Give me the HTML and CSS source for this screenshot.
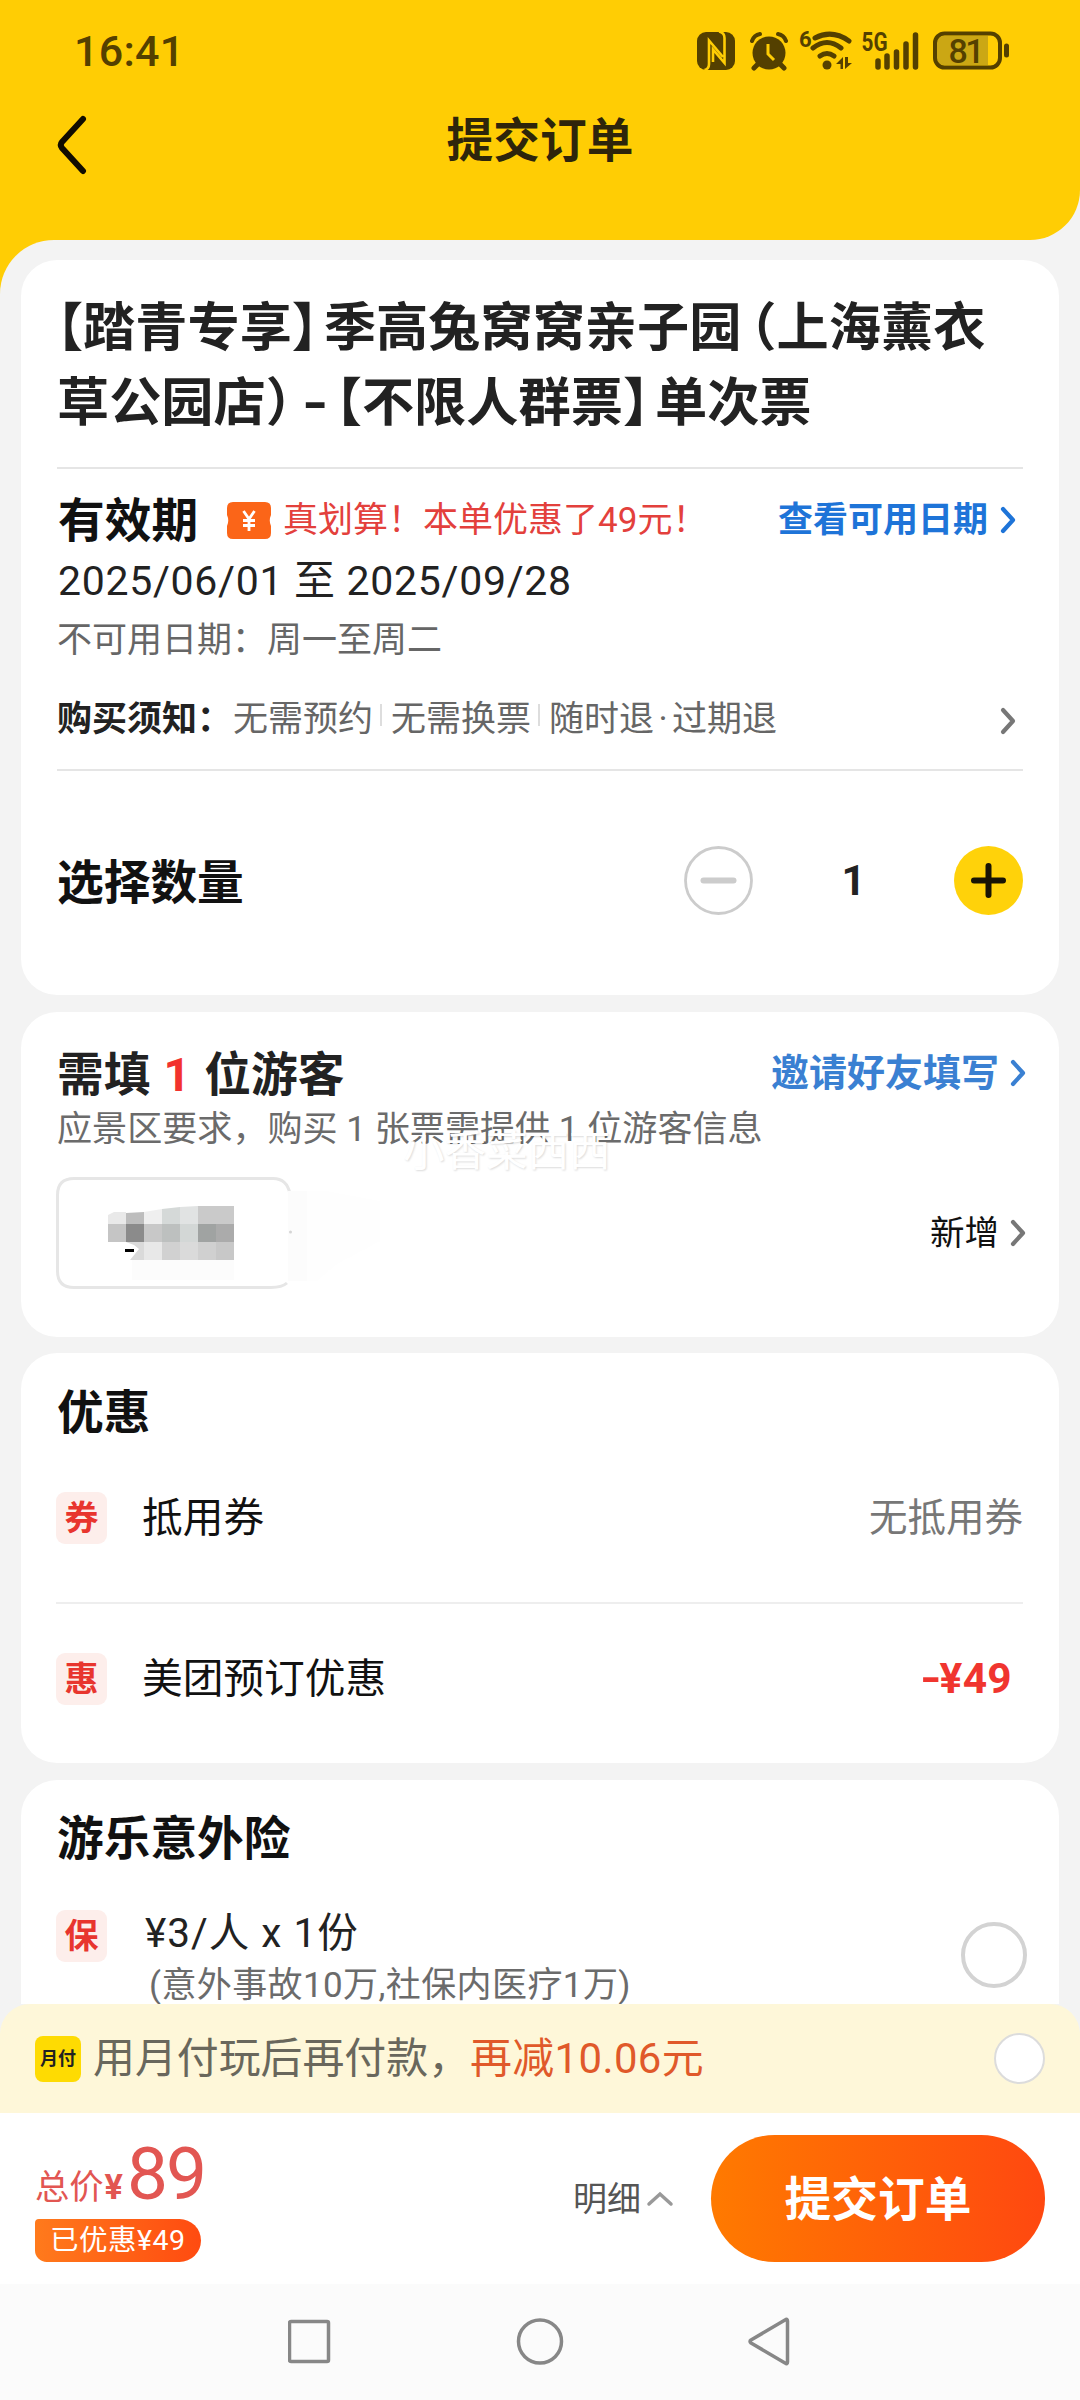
FILE: index.html
```html
<!DOCTYPE html>
<html lang="zh-CN">
<head>
<meta charset="utf-8">
<title>提交订单</title>
<link rel="stylesheet" href="styles.css">
</head>
<body>
<div class="screen">
  <header class="header">
    <div class="status">
      <span class="clock">16:41</span>
      <svg class="status-icons" width="320" height="48" viewBox="695 27 320 48" fill="none" stroke="#544000">
        <rect x="697" y="32" width="38" height="38" rx="9" fill="#544000" stroke="none"/>
        <path d="M704.500 70q4.500-1 4.500-6V40.500L723 57M719 31.500q5.500 1 5.500 6.500V63L713 49.500V62" stroke="#ffcd04" stroke-width="2.600"/>
        <circle cx="769" cy="53" r="16.500" fill="#544000" stroke="none"/>
        <path d="M752 41q2-6 8-7M786 41q-2-6-8-7" stroke-width="4" stroke-linecap="round"/>
        <path d="M758 64l-4 4M780 64l4 4" stroke-width="5" stroke-linecap="round"/>
        <path d="M768 44v10l6 6" stroke="#ffcd04" stroke-width="3"/>
        <text class="icon-text" x="799" y="46.500" font-size="22">6</text>
        <path d="M815 38q17-9 34 3M813 48q14-11 28 0M820 56q7-5 14 0" stroke-width="5" stroke-linecap="round"/>
        <circle cx="827" cy="65" r="4.500" fill="#544000" stroke="none"/>
        <path d="M836 64l7-7v12h-2.500v-5zM845 57v12l7-6h-4v-6z" fill="#544000" stroke="none"/>
        <text class="icon-text" x="861.500" y="50.500" font-size="25" textLength="26" lengthAdjust="spacingAndGlyphs">5G</text>
        <path d="M878 61v6M887 56v11M896.500 52v15M906 44v23M915.500 35v32" stroke-width="5.500" stroke-linecap="round"/>
        <path d="M943 36h45v29h-45a6 6 0 0 1-6-6V42a6 6 0 0 1 6-6z" fill="#cba714" stroke="none"/>
        <rect x="935" y="33.500" width="65" height="34" rx="9.500" stroke-width="4"/>
        <path d="M1006.500 46v9" stroke-width="5" stroke-linecap="round"/>
        <text class="icon-text medium" x="948.500" y="62.500" font-size="34" textLength="36">81</text>
      </svg>
    </div>
    <div class="titlebar">
      <svg class="back" width="32" height="60" viewBox="0 0 32 60"><path d="M28 4L7 27q-2.500 3 0 6L28 56" fill="none" stroke="#110c00" stroke-width="6" stroke-linecap="round"/></svg>
      <h1 class="page-title">提交订单</h1>
    </div>
  </header>

  <main class="content">
    <section class="card card-ticket">
      <h2 class="product"><span class="half">【</span>踏青专享<span class="half closing">】</span>季高兔窝窝亲子园<span class="half paren">（</span>上海薰衣<br>草公园店<span class="half paren-end">）</span><span class="dash">-</span><span class="half">【</span>不限人群票<span class="half closing">】</span>单次票</h2>
      <div class="validity">
        <div class="row validity-head">
          <h3 class="heading">有效期</h3>
          <svg class="coupon" width="44" height="37" viewBox="0 0 44 37"><path d="M6 0h32q6 0 6 6v7q-2.500 5.500 0 11v7q0 6-6 6H6q-6 0-6-6v-7q2.500-5.500 0-11V6q0-6 6-6z" fill="#fb6518"/><path d="M16.500 9l5.500 8 5.500-8M22 17v12M16 18.500h12M16 23.500h12" fill="none" stroke="#fff" stroke-width="2.800"/></svg>
          <span class="deal">真划算！本单优惠了49元！</span>
          <a class="link">查看可用日期<svg class="chev" width="18" height="28" viewBox="0 0 18 28"><path d="M4 3l10 11L4 25"/></svg></a>
        </div>
        <p class="dates">2025/06/01 至 2025/09/28</p>
        <p class="note">不可用日期：周一至周二</p>
        <div class="row rules">
          <strong>购买须知：</strong><span class="rule">无需预约</span><i class="sep"></i><span class="rule">无需换票</span><i class="sep"></i><span class="rule">随时退<span class="dot">·</span>过期退</span>
          <svg class="chev end grey" width="18" height="28" viewBox="0 0 18 28"><path d="M4 3l10 11L4 25"/></svg>
        </div>
      </div>
      <div class="row quantity">
        <h3 class="heading">选择数量</h3>
        <div class="stepper">
          <svg width="69" height="69" viewBox="0 0 69 69"><circle cx="34.500" cy="34.500" r="33" fill="#fff" stroke="#ccc" stroke-width="2.800"/><path d="M19.500 34.500h30" stroke="#ccc" stroke-width="6" stroke-linecap="round"/></svg>
          <span class="count">1</span>
          <svg width="69" height="69" viewBox="0 0 69 69"><circle cx="34.500" cy="34.500" r="34.500" fill="#ffd20a"/><path d="M20 34.500h29M34.500 20v29" stroke="#181405" stroke-width="6" stroke-linecap="round"/></svg>
        </div>
      </div>
    </section>

    <section class="card card-guest">
      <div class="row guest-head">
        <h3 class="heading dark">需填<span class="num">1</span>位游客</h3>
        <a class="link invite">邀请好友填写<svg class="chev" width="18" height="28" viewBox="0 0 18 28"><path d="M4 3l10 11L4 25"/></svg></a>
      </div>
      <p class="guest-note">应景区要求，购买 1 张票需提供 1 位游客信息<span class="watermark">小香菜西西</span></p>
      <div class="row guest-row">
        <svg width="340" height="112" viewBox="0 0 340 112">
          <path d="M235 14h35l54 10v40l-45 24-19 16h-25z" fill="#fefefe"/>
          <path d="M234 17Q231 1.500 217 1.500H18Q1.500 1.500 1.500 18V94Q1.500 110.500 18 110.500H215Q226 110.500 231 106" fill="none" stroke="#e6e6e6" stroke-width="3"/>
          <rect x="232" y="14" width="19" height="90" fill="#fcfcfc"/>
          <rect x="76" y="83" width="102" height="20" fill="#fcfcfc"/>
          <circle cx="234.500" cy="55" r="1.500" fill="#d5d5d5"/>
          <path d="M52 38l6-3h12v12H52z" fill="#e9e9e9"/>
          <path d="M70 36l18-1v12H70z" fill="#bdbdbd"/>
          <path d="M88 35l18-3v15H88z" fill="#efefef"/>
          <path d="M106 32l18-2v17h-18z" fill="#d5d9d8"/>
          <path d="M124 30l18-1v18h-18z" fill="#e1e3e3"/>
          <rect x="142" y="29" width="36" height="18" fill="#cacaca"/>
          <rect x="52" y="47" width="18" height="18" fill="#c5c5c5"/><rect x="70" y="47" width="18" height="18" fill="#8b8b8b"/>
          <rect x="88" y="47" width="18" height="18" fill="#c8c8c8"/><rect x="106" y="47" width="18" height="18" fill="#bdc0bf"/>
          <rect x="124" y="47" width="18" height="18" fill="#d3d7d6"/><rect x="142" y="47" width="18" height="18" fill="#a0a3a2"/>
          <rect x="160" y="47" width="18" height="18" fill="#ababab"/>
          <path d="M74 83l9-11-5-4-8-3h18v18z" fill="#dadada"/>
          <rect x="88" y="65" width="18" height="18" fill="#e8e8e8"/><rect x="106" y="65" width="18" height="18" fill="#d1d1d1"/>
          <rect x="124" y="65" width="18" height="18" fill="#dadada"/><rect x="142" y="65" width="18" height="18" fill="#d0d0d0"/>
          <rect x="160" y="65" width="18" height="18" fill="#c8c8c8"/>
          <rect x="69" y="72" width="9" height="3" fill="#000"/>
        </svg>
        <a class="add">新增<svg class="chev grey" width="18" height="28" viewBox="0 0 18 28"><path d="M4 3l10 11L4 25"/></svg></a>
      </div>
    </section>

    <section class="card card-promo">
      <h3 class="heading">优惠</h3>
      <div class="row promo">
        <span class="badge">券</span><span class="label">抵用券</span><span class="value">无抵用券</span>
      </div>
      <div class="row promo second">
        <span class="badge">惠</span><span class="label">美团预订优惠</span><span class="value minus"><span class="minus-sign">-</span>¥49</span>
      </div>
    </section>

    <section class="card card-insure">
      <h3 class="heading">游乐意外险</h3>
      <div class="row insure">
        <span class="badge">保</span>
        <div class="insure-text">
          <p class="insure-price">¥3/人 x 1份</p>
          <p class="insure-note">(意外事故10万,社保内医疗1万)</p>
        </div>
        <span class="radio"></span>
      </div>
    </section>
  </main>

  <footer class="footer">
    <div class="row paylater">
      <span class="pay-logo">月付</span>
      <span class="pay-text">用月付玩后再付款，<em>再减10.06元</em></span>
      <span class="radio small"></span>
    </div>
    <div class="row checkout">
      <div class="total">
        <p class="sum">总价<b>¥</b><span class="amount">89</span></p>
        <span class="saved">已优惠¥49</span>
      </div>
      <a class="detail">明细<svg width="28" height="16" viewBox="0 0 28 16"><path d="M3 13L14 3l11 10" fill="none" stroke="#999" stroke-width="3.500" stroke-linecap="round"/></svg></a>
      <button class="submit">提交订单</button>
    </div>
    <nav class="sysnav">
      <svg width="504" height="50" viewBox="288 2316 504 50" fill="none" stroke="#878787" stroke-width="3.500" stroke-linejoin="round">
        <rect x="289.500" y="2321.500" width="39" height="40" rx="1.500"/>
        <circle cx="540" cy="2341.500" r="21.500"/>
        <path d="M787.500 2321v41q0 3-2.500 1L751 2343q-2-1.500 0-3l34-20q2.500-2 2.500 1z"/>
      </svg>
    </nav>
  </footer>
</div>
</body>
</html>
```
FILE: styles.css
```css
* { box-sizing: border-box; margin: 0; padding: 0; }
body {
  width: 1080px;
  height: 2400px;
  overflow: hidden;
  background: #f3f3f3;
  color: #111;
  font-family: Roboto, "Noto Sans CJK SC", sans-serif;
}
h1, h2, h3 { font-weight: 700; }
p { white-space: nowrap; }
svg { display: block; flex: none; }
.screen { display: flex; flex-direction: column; height: 2400px; background: linear-gradient(90deg, #ffcd04 50%, #f3f3f3 50%); }
.row { display: flex; align-items: center; white-space: nowrap; line-height: 1; }

.header { flex: none; height: 240px; padding-top: 27px; background: #ffcd04; border-bottom-right-radius: 50px; }
.status { display: flex; align-items: center; justify-content: space-between; height: 48px; padding: 0 65px 0 74px; color: #544000; }
.clock { font-size: 43px; font-weight: 500; letter-spacing: 0.3px; }
.icon-text { font-family: Roboto, sans-serif; font-weight: 700; fill: #544000; stroke: none; }
.icon-text.medium { font-weight: 500; }
.titlebar { display: grid; grid-template-columns: 86px 1fr 86px; align-items: center; height: 60px; margin-top: 40px; }
.back { margin-left: 55px; }
.page-title { text-align: center; font-size: 46.7px; line-height: 60px; margin-top: -8px; color: #2e250b; }

.content { flex: 1; min-height: 0; display: flex; flex-direction: column; padding: 20px 21px 0; background: #f3f3f3; border-top-left-radius: 54px; overflow: hidden; }
.card { flex: none; background: #fff; border-radius: 36px; padding: 0 36px; margin-bottom: 17px; }
.heading { height: 60px; font-size: 46.7px; line-height: 63px; }
.dark { color: #222; }
.chev { fill: none; stroke: currentColor; stroke-width: 4.2; stroke-linecap: round; stroke-linejoin: round; }
.grey { color: #777; }
.end { margin: 3px 6px 0 auto; }

.card-ticket { height: 735px; padding-top: 31px; }
.product { height: 178px; border-bottom: 2px solid #e5e5e5; font-size: 52.2px; line-height: 75px; color: #222; white-space: nowrap; }
.half { font-family: "Noto Sans CJK SC", sans-serif; font-feature-settings: "halt"; line-height: 1; }
.closing { margin-right: 6px; }
.paren { margin-left: 9px; }
.paren-end { margin-right: 12px; }
.dash { display: inline-block; width: 32px; transform: scaleX(1.3); transform-origin: 0 50%; margin-left: -2px; margin-right: 2px; }
.validity { height: 302px; border-bottom: 2px solid #e5e5e5; padding-top: 21px; }
.validity-head { height: 60px; padding-left: 1px; }
.coupon { margin-left: 29px; }
.deal { margin-left: 12px; font-size: 35px; line-height: 60px; padding-top: 2px; color: #e3403c; }
.link { display: flex; align-items: center; margin-left: auto; margin-right: 6px; gap: 11px; font-size: 35px; font-weight: 700; color: #1e74d8; }
.dates { padding-left: 1px; font-size: 41px; line-height: 62px; letter-spacing: 0.7px; color: #222; }
.note { padding-left: 0; font-size: 35px; line-height: 58px; color: #666; }
.rules { height: 60px; margin-top: 19px; font-size: 35px; color: #666; }
.rules strong { color: #222; }
.rules .rule { margin-left: 1px; }
.sep { width: 2px; height: 22px; margin: -8px 8px 0 7px; background: #ddd; }
.dot { display: inline-block; width: 18px; text-align: center; }
.quantity { height: 222px; justify-content: space-between; }
.stepper { display: flex; align-items: center; margin-top: -3px; }
.count { width: 201px; text-align: center; font-size: 42px; font-weight: 700; color: #222; }

.card-guest { height: 325px; margin-bottom: 16px; padding-top: 31px; }
.guest-head { height: 60px; justify-content: space-between; }
.num { margin: 0 14px 0 13px; color: #f2322e; font-size: 47px; }
.invite { margin-right: -4px; font-size: 38px; color: #3a80d2; gap: 10px; }
.guest-note { position: relative; height: 50px; font-size: 35.1px; line-height: 53px; color: #6b6b6b; }
.watermark { position: absolute; left: 346px; top: 24px; font-size: 41.5px; line-height: 50px; color: #fff; text-shadow: 1px 1px 2px rgba(0,0,0,.14); }
.guest-row { margin-top: 24px; margin-left: -1px; justify-content: space-between; }
.add { display: flex; align-items: center; gap: 10px; margin-right: -4px; font-size: 34.5px; color: #111; }

.card-promo { height: 410px; padding-top: 29px; }
.promo { height: 104px; margin: 24px 0 32px -1px; }
.card-promo .second { border-top: 2px solid #eee; height: 152px; margin-top: 0; margin-bottom: 0; }
.badge { flex: none; width: 51px; height: 52px; border-radius: 9px; background: #fdeeeb; color: #e8352e; font-size: 34px; line-height: 52px; font-weight: 700; text-align: center; }
.label { margin-left: 35px; font-size: 40.7px; }
.value { margin-left: auto; font-size: 38.5px; color: #777; }
.minus { display: flex; margin-right: 11px; font-size: 42.5px; font-weight: 700; letter-spacing: 0.3px; color: #f0352f; }
.minus-sign { display: inline-block; width: 20px; transform: scaleX(1.3); transform-origin: 0 50%; }

.card-insure { height: 300px; padding-top: 28px; }
.insure { align-items: flex-start; margin: 42px -4px 0 -1px; }
.insure-text { margin-left: 38px; }
.insure-price { font-size: 40.5px; line-height: 46px; letter-spacing: 1px; color: #222; }
.insure-note { margin-left: 4px; font-size: 35px; line-height: 59px; letter-spacing: 0.4px; color: #6b6b6b; }
.radio { width: 66px; height: 66px; margin: 12px 0 0 auto; border: 4px solid #d3d3d3; border-radius: 50%; background: #fff; }
.radio.small { width: 51px; height: 51px; margin-top: 0; border: 2px solid #dcdcdc; }

.footer { flex: none; height: 396px; background: #f3f3f3; }
.paylater { height: 109px; padding: 0 35px; background: #fef7d9; border-radius: 30px 30px 0 0; }
.pay-logo { width: 46px; height: 46px; border-radius: 8px; background: #fedb02; color: #222; font-size: 18px; line-height: 45px; text-align: center; font-weight: 700; }
.pay-text { margin-left: 12px; font-size: 41.9px; color: #69675c; }
.pay-text em { font-style: normal; letter-spacing: 0.4px; color: #e0592a; }
.checkout { height: 171px; padding: 0 35px; background: #fff; }
.total { width: 300px; height: 171px; padding-top: 19px; }
.sum { height: 87px; font-size: 34.3px; line-height: 84px; color: #e25652; }
.sum b { margin-left: 1px; }
.amount { font-size: 73px; letter-spacing: -2px; margin-left: 4px; line-height: 84px; }
.saved { display: inline-block; height: 43px; padding: 0 15px 0 15px; border-radius: 4px 22px 22px 12px; background: linear-gradient(90deg, #ff7a1c, #ff4b10); color: #fff; font-size: 28.5px; line-height: 44px; letter-spacing: 0.5px; }
.detail { display: flex; align-items: center; gap: 5px; margin-left: auto; margin-right: 37px; font-size: 34px; color: #555; }
.submit { width: 334px; height: 127px; border: 0; border-radius: 64px; padding-top: 3px; background: linear-gradient(90deg, #ff7a00, #ff4810); color: #fff; font: 700 46.7px/124px Roboto, "Noto Sans CJK SC", sans-serif; }
.sysnav { display: flex; justify-content: center; height: 116px; padding-top: 32px; background: #fbfbfb; }
```
